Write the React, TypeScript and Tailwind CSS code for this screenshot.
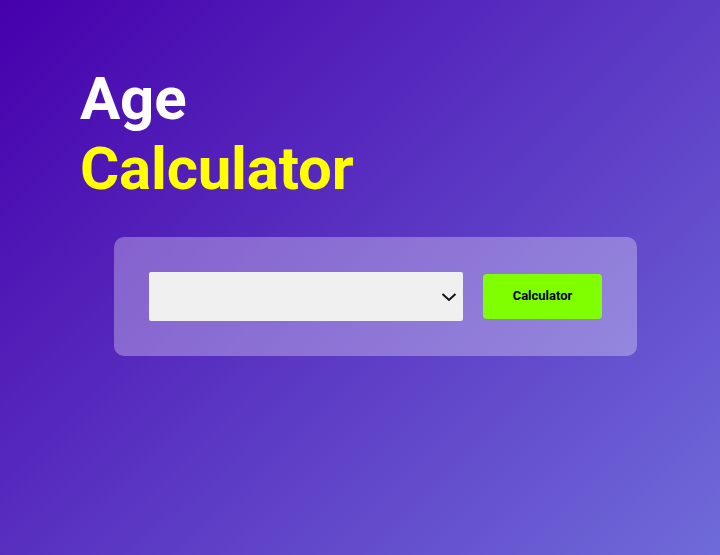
import React from "react";

export default function App() {
  return (
    <div
      className="w-[720px] h-[555px] overflow-hidden bg-[linear-gradient(135deg,#4600ac_0%,#6f6bd9_100%)]"
      style={{ fontFamily: "Roboto, 'Liberation Sans', sans-serif" }}
    >
      <div className="pl-[80px] pt-[64px]">
        <h1 className="text-[60px] font-bold leading-[70px] tracking-[-0.2px] text-white">Age</h1>
        <h1 className="text-[60px] font-bold leading-[70px] tracking-[-0.2px] text-[#ffff00]">Calculator</h1>
      </div>
      <div className="ml-[114px] mt-[33px] w-[523px] h-[119px] rounded-[10px] bg-white/30 flex items-center pl-[35px] gap-[20px]">
        <div className="relative w-[314px] h-[49px] bg-[#f0f0f0] rounded-[2px] flex items-center justify-end pr-[5px]">
          <svg width="18" height="16" viewBox="0 0 18 16" fill="none">
            <path d="M2.5 5 L9 11 L15.5 5" stroke="#111" strokeWidth="2" />
          </svg>
        </div>
        <button className="w-[119px] h-[45px] rounded-[4px] bg-[#80ff00] text-[13px] font-bold leading-[15px] text-black pb-[3px]">
          Calculator
        </button>
      </div>
    </div>
  );
}
